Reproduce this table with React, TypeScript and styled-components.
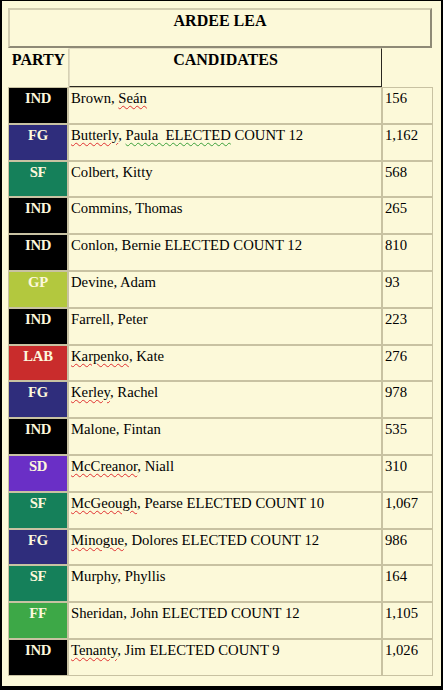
import React from "react";
import styled, { createGlobalStyle } from "styled-components";

const Global = createGlobalStyle`
  html, body { margin: 0; padding: 0; background: #000; }
  body { font-family: "Liberation Serif", "Times New Roman", serif; }
`;

const Frame = styled.div`
  box-sizing: border-box;
  width: 443px;
  height: 690px;
  border-style: solid;
  border-color: #000;
  border-width: 1px 2px 4px 2px;
  background: #fcf9d9;
  padding: 7px 9px 0 6px;
  color: #000;
`;

const TitleBox = styled.div`
  box-sizing: border-box;
  height: 40px;
  border: 2px solid;
  border-color: #d2cdb0 #8e8a76 #8e8a76 #d2cdb0;
  text-align: center;
  font-weight: bold;
  font-size: 16px;
  padding-top: 2px;
`;

const HeaderRow = styled.div`
  display: grid;
  grid-template-columns: 61px 313px;
  height: 39px;
`;

const HeaderCell = styled.div<{ $dark?: boolean }>`
  box-sizing: border-box;
  border: 1px solid;
  border-color: ${(p) =>
    p.$dark ? "#e2ddc2 #2a2820 #2a2820 #e2ddc2" : "transparent #d6d1b4 transparent transparent"};
  font-weight: bold;
  font-size: 16px;
  text-align: center;
  padding-top: 2px;
`;

const DataGrid = styled.div`
  display: grid;
  grid-template-columns: 58px 312px 49px;
  grid-auto-rows: 34.8px;
  gap: 2px;
  padding: 1px;
  background: #c8c2a2;
  width: 425px;
  box-sizing: border-box;
`;

const PartyCell = styled.div<{ $bg: string }>`
  background: ${(p) => p.$bg};
  color: #fdf8dc;
  font-weight: bold;
  font-size: 14.7px;
  text-align: center;
  padding-top: 2px;
  letter-spacing: -0.3px;
`;

const TextCell = styled.div`
  background: #fcf9d9;
  font-size: 14.7px;
  padding: 2px 0 0 2px;
  white-space: nowrap;
  overflow: hidden;
`;

const Spell = styled.span<{ $green?: boolean }>`
  text-decoration: underline wavy ${(p) => (p.$green ? "#3aa03a" : "#e03030")};
  text-decoration-thickness: 1px;
  text-underline-offset: 2px;
`;

const COLORS: Record<string, string> = {
  IND: "#000000",
  FG: "#2f2d7c",
  SF: "#15805a",
  GP: "#b3c83e",
  LAB: "#c92c2c",
  SD: "#6a2fc6",
  FF: "#3da847",
};

type Row = { party: string; name: React.ReactNode; votes: string };

const rows: Row[] = [
  { party: "IND", name: <>Brown, <Spell>Seán</Spell></>, votes: "156" },
  {
    party: "FG",
    name: (
      <>
        <Spell>Butterly</Spell>, <Spell $green>Paula&nbsp; ELECTED</Spell> COUNT 12
      </>
    ),
    votes: "1,162",
  },
  { party: "SF", name: "Colbert, Kitty", votes: "568" },
  { party: "IND", name: "Commins, Thomas", votes: "265" },
  { party: "IND", name: "Conlon, Bernie ELECTED COUNT 12", votes: "810" },
  { party: "GP", name: "Devine, Adam", votes: "93" },
  { party: "IND", name: "Farrell, Peter", votes: "223" },
  { party: "LAB", name: <><Spell>Karpenko</Spell>, Kate</>, votes: "276" },
  { party: "FG", name: <><Spell>Kerley</Spell>, Rachel</>, votes: "978" },
  { party: "IND", name: "Malone, Fintan", votes: "535" },
  { party: "SD", name: <><Spell>McCreanor</Spell>, Niall</>, votes: "310" },
  { party: "SF", name: <><Spell>McGeough</Spell>, Pearse ELECTED COUNT 10</>, votes: "1,067" },
  { party: "FG", name: <><Spell>Minogue</Spell>, Dolores ELECTED COUNT 12</>, votes: "986" },
  { party: "SF", name: "Murphy, Phyllis", votes: "164" },
  { party: "FF", name: "Sheridan, John ELECTED COUNT 12", votes: "1,105" },
  { party: "IND", name: <><Spell>Tenanty</Spell>, Jim ELECTED COUNT 9</>, votes: "1,026" },
];

export default function App() {
  return (
    <>
      <Global />
      <Frame>
        <TitleBox>ARDEE LEA</TitleBox>
        <HeaderRow>
          <HeaderCell>PARTY</HeaderCell>
          <HeaderCell $dark>CANDIDATES</HeaderCell>
        </HeaderRow>
        <DataGrid>
          {rows.map((r, i) => (
            <React.Fragment key={i}>
              <PartyCell $bg={COLORS[r.party]}>{r.party}</PartyCell>
              <TextCell>{r.name}</TextCell>
              <TextCell>{r.votes}</TextCell>
            </React.Fragment>
          ))}
        </DataGrid>
      </Frame>
    </>
  );
}
